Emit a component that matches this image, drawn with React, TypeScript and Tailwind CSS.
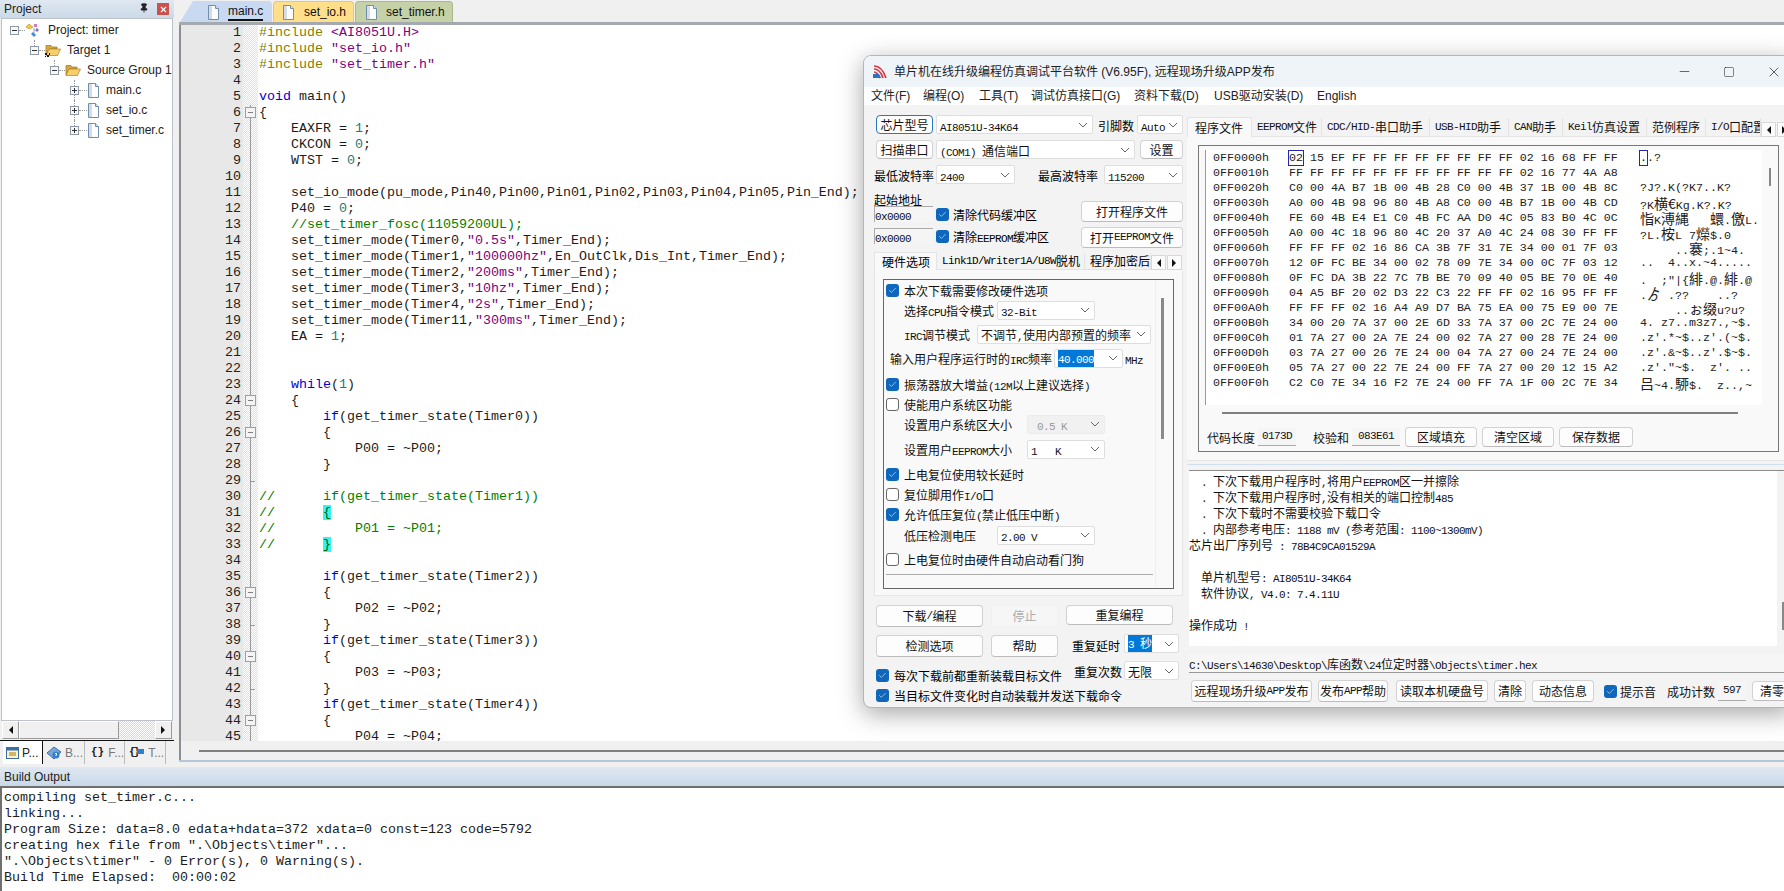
import React from 'react';
import { Minus, Square, X, Pin, Check } from 'lucide-react';

const codeLines = [
  '#include <AI8051U.H>',
  '#include "set_io.h"',
  '#include "set_timer.h"',
  '',
  'void main()',
  '{',
  '    EAXFR = 1;',
  '    CKCON = 0;',
  '    WTST = 0;',
  '',
  '    set_io_mode(pu_mode,Pin40,Pin00,Pin01,Pin02,Pin03,Pin04,Pin05,Pin_End);',
  '    P40 = 0;',
  '    //set_timer_fosc(11059200UL);',
  '    set_timer_mode(Timer0,"0.5s",Timer_End);',
  '    set_timer_mode(Timer1,"100000hz",En_OutClk,Dis_Int,Timer_End);',
  '    set_timer_mode(Timer2,"200ms",Timer_End);',
  '    set_timer_mode(Timer3,"10hz",Timer_End);',
  '    set_timer_mode(Timer4,"2s",Timer_End);',
  '    set_timer_mode(Timer11,"300ms",Timer_End);',
  '    EA = 1;',
  '',
  '',
  '    while(1)',
  '    {',
  '        if(get_timer_state(Timer0))',
  '        {',
  '            P00 = ~P00;',
  '        }',
  '',
  '//      if(get_timer_state(Timer1))',
  '//      {',
  '//          P01 = ~P01;',
  '//      }',
  '',
  '        if(get_timer_state(Timer2))',
  '        {',
  '            P02 = ~P02;',
  '        }',
  '        if(get_timer_state(Timer3))',
  '        {',
  '            P03 = ~P03;',
  '        }',
  '        if(get_timer_state(Timer4))',
  '        {',
  '            P04 = ~P04;',
];

const foldBoxes = [6, 24, 26, 36, 40, 44];
const foldTicks = [29, 38, 42];

const hexRows = [
  ['0FF0000h', '02 15 EF FF FF FF FF FF FF FF FF 02 16 68 FF FF', '..?'],
  ['0FF0010h', 'FF FF FF FF FF FF FF FF FF FF FF 02 16 77 4A A8', ''],
  ['0FF0020h', 'C0 00 4A B7 1B 00 4B 28 C0 00 4B 37 1B 00 4B 8C', '?J?.K(?K7..K?'],
  ['0FF0030h', 'A0 00 4B 98 96 80 4B A8 C0 00 4B B7 1B 00 4B CD', '?K横€Kg.K?.K?'],
  ['0FF0040h', 'FE 60 4B E4 E1 C0 4B FC AA D0 4C 05 83 B0 4C 0C', '恉K溥縄   蠉.儌L.'],
  ['0FF0050h', 'A0 00 4C 18 96 80 4C 20 37 A0 4C 24 08 30 FF FF', '?L.桉L 7爃$.0'],
  ['0FF0060h', 'FF FF FF 02 16 86 CA 3B 7F 31 7E 34 00 01 7F 03', '     ..褰;.1~4.'],
  ['0FF0070h', '12 0F FC BE 34 00 02 78 09 7E 34 00 0C 7F 03 12', '..  4..x.~4.....'],
  ['0FF0080h', '0F FC DA 3B 22 7C 7B BE 70 09 40 05 BE 70 0E 40', '.  ;"|{緋.@.緋.@'],
  ['0FF0090h', '04 A5 BF 20 02 D3 22 C3 22 FF FF 02 16 95 FF FF', '.ゟ .??    ..?'],
  ['0FF00A0h', 'FF FF FF 02 16 A4 A9 D7 BA 75 EA 00 75 E9 00 7E', '     ..ぉ缀u?u?'],
  ['0FF00B0h', '34 00 20 7A 37 00 2E 6D 33 7A 37 00 2C 7E 24 00', '4. z7..m3z7.,~$.'],
  ['0FF00C0h', '01 7A 27 00 2A 7E 24 00 02 7A 27 00 28 7E 24 00', ".z'.*~$..z'.(~$."],
  ['0FF00D0h', '03 7A 27 00 26 7E 24 00 04 7A 27 00 24 7E 24 00', ".z'.&~$..z'.$~$."],
  ['0FF00E0h', '05 7A 27 00 22 7E 24 00 FF 7A 27 00 20 12 15 A2', ".z'.\"~$.  z'. .."],
  ['0FF00F0h', 'C2 C0 7E 34 16 F2 7E 24 00 FF 7A 1F 00 2C 7E 34', '吕~4.駵$.  z..,~'],
];

const logLines = [
  '  . 下次下载用户程序时,将用户EEPROM区一并擦除',
  '  . 下次下载用户程序时,没有相关的端口控制485',
  '  . 下次下载时不需要校验下载口令',
  '  . 内部参考电压: 1188 mV (参考范围: 1100~1300mV)',
  '芯片出厂序列号 : 78B4C9CA01529A',
  '',
  '  单片机型号: AI8051U-34K64',
  '  软件协议, V4.0: 7.4.11U',
  '',
  '操作成功 !',
];

const buildLines = [
  'compiling set_timer.c...',
  'linking...',
  'Program Size: data=8.0 edata+hdata=372 xdata=0 const=123 code=5792',
  'creating hex file from ".\\Objects\\timer"...',
  '".\\Objects\\timer" - 0 Error(s), 0 Warning(s).',
  'Build Time Elapsed:  00:00:02',
];

const cjkSplit = /([\u2E80-\u9FFF\uFF00-\uFFEF\u3000-\u303F€]+)/;

// SimSun-like text: CJK at 12px, latin squeezed to half width
const T: React.FC<{ text: string }> = ({ text }) => (
  <>
    {text.split(cjkSplit).map((part, i) =>
      i % 2 === 1 ? (
        <span key={i} className="font-['Noto_Sans_CJK_SC',sans-serif] text-[12px]">{part}</span>
      ) : (
        <span key={i} className="font-['Liberation_Mono',monospace] text-[11px] tracking-[-0.6px]">{part}</span>
      )
    )}
  </>
);

const AsciiText: React.FC<{ text: string }> = ({ text }) => (
  <>
    {text.split(cjkSplit).map((part, i) =>
      i % 2 === 1 ? (
        <span key={i} className="font-['Noto_Sans_CJK_SC',sans-serif] text-[14px]">{part}</span>
      ) : (
        <span key={i}>{part}</span>
      )
    )}
  </>
);

const tokenRe = /("[^"]*"|<AI8051U\.H>|#include|\/\/.*$|\b(?:void|while|if)\b|\b\d+\b)/;

const CodeText: React.FC<{ line: string }> = ({ line }) => {
  if (line.startsWith('//')) {
    const m = line.match(/^(.*?)([{}])$/);
    if (m && m[1].trim() === '//') {
      return (
        <span className="text-[#008000]">
          {m[1]}
          <span className="bg-[#33f4f4] text-[#006000]">{m[2]}</span>
        </span>
      );
    }
    return <span className="text-[#008000]">{line}</span>;
  }
  return (
    <>
      {line.split(tokenRe).map((part, i) => {
        if (i % 2 === 0) return <span key={i}>{part}</span>;
        if (part === '#include') return <span key={i} className="text-[#808000]">{part}</span>;
        if (part.startsWith('"') || part.startsWith('<')) return <span key={i} className="text-[#800080]">{part}</span>;
        if (part.startsWith('//')) return <span key={i} className="text-[#008000]">{part}</span>;
        if (/^\d/.test(part)) return <span key={i} className="text-[#108080]">{part}</span>;
        return <span key={i} className="text-[#0000d0]">{part}</span>;
      })}
    </>
  );
};

const FileIcon = () => (
  <svg width="13" height="15" viewBox="0 0 13 15" className="shrink-0">
    <path d="M1.5 .5h7l3 3v11h-10z" fill="#fff" stroke="#6f8fb0" />
    <path d="M2 1h3v13H2z" fill="#d5dce6" />
    <path d="M8.5 .5v3h3" fill="#dfe8f2" stroke="#6f8fb0" />
  </svg>
);

const FolderIcon: React.FC<{ target?: boolean }> = ({ target }) => (
  <svg width="16" height="14" viewBox="0 0 16 14" className="shrink-0">
    <path d="M1 2.500h5l1 1.500h5v2H4L1 12z" fill="#d9a93a" stroke="#9a7420" strokeWidth=".7" />
    <path d="M4 6h11.500L12.500 12.500H1z" fill="#f6cf6b" stroke="#a98228" strokeWidth=".7" />
    {target && <path d="M0 10h2v2H0zM2 12h2v2H2zM4 10h1v2H4zM0 13h1v1H0z" fill="#111" />}
  </svg>
);

const ProjectIcon = () => (
  <svg width="16" height="15" viewBox="0 0 16 15" className="shrink-0">
    <path d="M1 4l3-3 4 3-3 2z" fill="#f3c84a" stroke="#b38a1c" strokeWidth=".6" />
    <path d="M9 1h3v3H9z" fill="#d07bc0" />
    <path d="M12 5l2 2-2 2-2-2z" fill="#7c6fd0" />
    <path d="M8 9l3 3-2 2-3-3z" fill="#3a8edb" />
    <path d="M9 5v5" stroke="#888" strokeWidth=".8" />
  </svg>
);

const TreeBox: React.FC<{ open?: boolean }> = ({ open }) => (
  <div className="relative w-[9px] h-[9px] border border-[#8f9aa6] bg-[#f5f7fa] shrink-0 flex items-center justify-center">
    <div className="w-[5px] h-px bg-[#333]" />
    {!open && <div className="absolute w-px h-[5px] bg-[#333]" />}
  </div>
);

const TreeRow: React.FC<{ box: string; open?: boolean; icon: React.ReactNode; label: string; link: string; tail: string; vline?: string }> = ({ box, open, icon, label, link, tail, vline }) => (
  <div className={`relative flex items-center h-[20px] ${box}`}>
    {vline && <div className={`absolute border-l border-dotted border-[#999] ${vline}`} />}
    <TreeBox open={open} />
    <div className={`h-0 border-t border-dotted border-[#999] shrink-0 ${link}`} />
    <div className={`flex items-center shrink-0 ${tail}`}>{icon}</div>
    <span className="text-[12px] text-[#222] whitespace-nowrap font-['Liberation_Sans',sans-serif]">{label}</span>
  </div>
);

const Arrow: React.FC<{ dir: 'left' | 'right' }> = ({ dir }) => (
  <svg width="5" height="8" viewBox="0 0 5 8">
    <path d={dir === 'left' ? 'M5 0v8L1 4z' : 'M0 0v8l4-4z'} fill="#111" />
  </svg>
);

const ProjectPane = () => (
  <div className="w-[174px] h-full flex flex-col shrink-0">
    <div className="h-[18px] bg-gradient-to-b from-[#dfe8f2] to-[#ccd9e7] flex items-center pl-[4px] font-['Liberation_Sans',sans-serif] text-[12px] text-[#222] relative">
      Project
      <Pin size={10} className="absolute left-[139px] top-[3px] text-[#222] fill-[#222]" />
      <div className="absolute left-[157px] top-[3px] w-[12px] h-[12px] bg-[#c9524e] flex items-center justify-center">
        <X size={9} strokeWidth={3} className="text-white" />
      </div>
    </div>
    <div className="flex-1 mx-px border border-[#bcc3cb] bg-white pt-[1px] mr-[1px]">
      <TreeRow box="pl-[8px]" open link="w-[6px]" tail="pr-[7px]" icon={<ProjectIcon />} label="Project: timer" />
      <TreeRow box="pl-[28px]" open link="w-[6px]" tail="pr-[6px]" vline="left-[32px] top-0 h-[6px]" icon={<FolderIcon target />} label="Target 1" />
      <TreeRow box="pl-[48px]" open link="w-[6px]" tail="pr-[6px]" vline="left-[52px] top-0 h-[6px]" icon={<FolderIcon />} label="Source Group 1" />
      <TreeRow box="pl-[68px]" link="w-[8px]" tail="pr-[6px]" vline="left-[72px] inset-y-0" icon={<FileIcon />} label="main.c" />
      <TreeRow box="pl-[68px]" link="w-[8px]" tail="pr-[6px]" vline="left-[72px] inset-y-0" icon={<FileIcon />} label="set_io.c" />
      <TreeRow box="pl-[68px]" link="w-[8px]" tail="pr-[6px]" vline="left-[72px] top-0 h-[6px]" icon={<FileIcon />} label="set_timer.c" />
    </div>
    <div className="h-[18px] mx-[2px] flex bg-[#ececec]">
      <div className="w-[17px] h-full bg-[#f0f0f0] border border-[#9a9a9a] border-t-white border-l-white flex items-center justify-center"><Arrow dir="left" /></div>
      <div className="w-[100px] h-full bg-[#f0f0f0] border border-[#9a9a9a] border-t-white border-l-white" />
      <div className="flex-1 h-full bg-[repeating-conic-gradient(#d8d8d8_0_25%,#ffffff_0_50%)] bg-[length:2px_2px]" />
      <div className="w-[17px] h-full bg-[#f0f0f0] border border-[#9a9a9a] border-t-white border-l-white flex items-center justify-center"><Arrow dir="right" /></div>
    </div>
    <div className="h-[27px] mt-[1px] border-t border-[#111] flex text-[12px] font-['Liberation_Sans',sans-serif] text-[#777] pl-[3px]">
      <div className="w-[40px] h-[23px] bg-white flex items-center pl-[3px] gap-[3px] text-[#222] border-r border-[#111]">
        <svg width="13" height="12" viewBox="0 0 13 12"><rect x=".5" y=".5" width="12" height="11" fill="#fff3c0" stroke="#3a6ea5" /><rect x=".5" y=".5" width="12" height="3" fill="#3a6ea5" /><path d="M3 6h7M3 8h7" stroke="#a07820" /></svg>
        P...
      </div>
      <div className="w-[42px] h-[23px] flex items-center pl-[3px] gap-[3px] border-r border-[#bbb]">
        <svg width="16" height="14" viewBox="0 0 16 14"><path d="M1 7l7-6 7 5-7 7z" fill="#7aa5d8" stroke="#3f6ea8" /><circle cx="10" cy="9" r="3.500" fill="#2f7fd0" /><path d="M9 8q1-1.500 2 0l-1 1v1" stroke="#fff" fill="none" /></svg>
        B...
      </div>
      <div className="w-[40px] h-[23px] flex items-center pl-[6px] gap-[4px] border-r border-[#bbb]">
        <span className="text-[#222] font-bold font-['Liberation_Mono',monospace] text-[11px]">{'{}'}</span>
        F...
      </div>
      <div className="w-[41px] h-[23px] flex items-center pl-[4px] gap-[4px] border-r border-[#bbb]">
        <span className="relative text-[#222] font-bold font-['Liberation_Mono',monospace] text-[11px] tracking-[-2px] pr-[6px]">{'{}'}
          <span className="absolute right-0 top-[5px] w-[7px] h-[5px] bg-[#2f7fd0]" />
        </span>
        T...
      </div>
    </div>
  </div>
);

const EditorTab: React.FC<{ label: string; className: string; active?: boolean }> = ({ label, className, active }) => (
  <div className={`h-[21px] flex items-center rounded-t-[4px] border border-b-0 ${className}`}>
    <FileIcon />
    <span className={`text-[12px] text-[#111] font-['Liberation_Sans',sans-serif] ${active ? 'border-b-2 border-[#111] leading-[15px] font-medium' : ''}`}>{label}</span>
  </div>
);

const CodeRow: React.FC<{ n: number; line: string }> = ({ n, line }) => {
  const boxed = foldBoxes.includes(n);
  const tick = foldTicks.includes(n);
  return (
    <div className="h-[16px] flex leading-[16px]">
      <div className="w-[62px] bg-[#e8e8e8] text-right pr-[2px] shrink-0 text-[#222]">{n}</div>
      <div className="relative w-[15px] shrink-0 bg-[repeating-conic-gradient(#e0e0e0_0_25%,#ffffff_0_50%)] bg-[length:2px_2px]">
        {n >= 6 && <div className="absolute left-[7px] top-0 bottom-0 w-px bg-[#9a9a9a]" />}
        {boxed && (
          <div className="absolute left-[2px] top-[2px] w-[11px] h-[11px] border border-[#a0a0a0] bg-[#f4f4f4] flex items-center justify-center">
            <div className="w-[5px] h-px bg-[#808080]" />
          </div>
        )}
        {tick && <div className="absolute left-[7px] top-[8px] w-[5px] h-px bg-[#9a9a9a]" />}
      </div>
      <div className="pl-px whitespace-pre text-[#1c1c1c]"><CodeText line={line} /></div>
    </div>
  );
};

const Editor = () => (
  <div className="flex-1 min-w-0 h-full flex flex-col ml-[4px]">
    <div className="h-[22px] flex items-end relative pl-[2px]">
      <div className="w-0 h-0 border-l-[13px] border-l-transparent border-b-[21px] border-b-[#c9d9f1]" />
      <EditorTab label="main.c" active className="w-[79px] pl-[14px] gap-[8px] border-[#c9d9f1] bg-[#c9d9f1] border-l-0 rounded-tl-none" />
      <EditorTab label="set_io.h" className="ml-px w-[81px] pl-[8px] gap-[9px] border-[#e6c779] bg-[#ffdf8a]" />
      <EditorTab label="set_timer.h" className="ml-px w-[98px] pl-[9px] gap-[8px] border-[#aab88c] bg-[#c5d1a6]" />
    </div>
    <div className="h-[3px] bg-[#a5aab0] ml-[1px]" />
    <div className="h-[716px] overflow-hidden bg-white border-l-2 border-[#8a8f96] ml-[1px] font-['Liberation_Mono',monospace] text-[13.33px]">
      {codeLines.map((line, i) => (
        <CodeRow key={i} n={i + 1} line={line} />
      ))}
    </div>
    <div className="h-[19px] bg-[#f0f0f0] border-l-2 border-[#8a8f96] ml-[1px] flex items-center pl-[18px]">
      <div className="h-[2px] w-full bg-[#808080]" />
    </div>
    <div className="h-[2px] bg-[#b7c6d6] ml-[1px]" />
    <div className="h-[5px]" />
  </div>
);

const BuildOutput = () => (
  <div className="flex-1 flex flex-col min-h-0">
    <div className="h-[19px] bg-gradient-to-b from-[#dfe8f2] to-[#c9d8e8] flex items-center pl-[4px] text-[12px] text-[#222] font-['Liberation_Sans',sans-serif]">
      Build Output
    </div>
    <div className="flex-1 bg-white border-t-2 border-l-2 border-[#6f6f6f] pt-[2px] pl-[2px] font-['Liberation_Mono',monospace] text-[13.33px] leading-[16px] text-[#1c1c1c] whitespace-pre">
      {buildLines.map((line, i) => (
        <div key={i}>{line}</div>
      ))}
    </div>
  </div>
);

const Chevron = () => (
  <svg width="10" height="6" viewBox="0 0 10 6" className="shrink-0">
    <path d="M1 1l4 4 4-4" fill="none" stroke="#666" strokeWidth="1" />
  </svg>
);

const Sel: React.FC<{ text: string; className: string; selected?: boolean; disabled?: boolean }> = ({ text, className, selected, disabled }) => (
  <div className={`flex items-center justify-between shrink-0 rounded-[2px] border pl-[3px] pr-[4px] whitespace-pre ${disabled ? 'bg-[#f1f1f1] border-[#ececec] text-[#999]' : 'bg-white border-[#dedede] text-[#111]'} ${className}`}>
    {selected ? (
      <span className="bg-[#0078d7] text-white leading-[14px]"><T text={text} /></span>
    ) : (
      <span><T text={text} /></span>
    )}
    <Chevron />
  </div>
);

const Btn: React.FC<{ text: string; className: string; primary?: boolean; disabled?: boolean }> = ({ text, className, primary, disabled }) => (
  <div className={`flex items-center justify-center shrink-0 rounded-[4px] border whitespace-nowrap ${primary ? 'border-[#2878c0] bg-[#fdfdfd] text-[#111]' : disabled ? 'border-[#f0f0f0] bg-[#f6f6f6] text-[#aaa]' : 'border-[#d2d2d2] border-b-[#bcbcbc] bg-[#fdfdfd] text-[#111]'} ${className}`}>
    <T text={text} />
  </div>
);

const Chk: React.FC<{ on?: boolean }> = ({ on }) =>
  on ? (
    <div className="w-[13px] h-[13px] shrink-0 rounded-[3px] bg-[#0f66bd] flex items-center justify-center">
      <Check size={9} strokeWidth={1.5} className="text-white" />
    </div>
  ) : (
    <div className="w-[13px] h-[13px] shrink-0 rounded-[3px] border border-[#666] bg-white" />
  );

const ChkRow: React.FC<{ on?: boolean; text: string; className: string }> = ({ on, text, className }) => (
  <div className={`flex items-center h-[20px] pl-[2px] gap-[5px] whitespace-nowrap ${className}`}>
    <Chk on={on} />
    <span><T text={text} /></span>
  </div>
);

const Label: React.FC<{ text: string; className: string }> = ({ text, className }) => (
  <div className={`shrink-0 whitespace-nowrap ${className}`}><T text={text} /></div>
);

const MiniTab: React.FC<{ text: string; className: string; active?: boolean }> = ({ text, className, active }) => (
  <div className={`shrink-0 overflow-hidden whitespace-nowrap flex items-center pl-[5px] ${active ? 'bg-[#f9f9f9] border-t border-l border-r border-[#e4e4e4]' : 'border-r border-b border-[#e4e4e4] bg-[#f3f3f3]'} ${className}`}>
    <T text={text} />
  </div>
);

const TabScroller = () => (
  <div className="shrink-0 flex gap-px w-[32px]">
    <div className="w-[15px] h-[15px] bg-[#fbfbfb] border border-[#d8d8d8] flex items-center justify-center"><Arrow dir="left" /></div>
    <div className="w-[15px] h-[15px] bg-[#fbfbfb] border border-[#d8d8d8] flex items-center justify-center"><Arrow dir="right" /></div>
  </div>
);

const HardwarePanel = () => (
  <div className="relative mx-[8px] h-[310px] border border-[#666] text-[#111]">
    <ChkRow on text="本次下载需要修改硬件选项" className="" />
    <div className="flex items-center h-[20px] pl-[20px]">
      <Label text="选择CPU指令模式" className="w-[93px]" />
      <Sel text="32-Bit" className="w-[98px] h-[19px]" />
    </div>
    <div className="flex items-center h-[20px] mt-[4px] pl-[20px]">
      <Label text="IRC调节模式" className="w-[73px]" />
      <Sel text="不调节,使用内部预置的频率" className="w-[174px] h-[19px]" />
    </div>
    <div className="flex items-center h-[20px] mt-[4px] pl-[6px]">
      <Label text="输入用户程序运行时的IRC频率" className="w-[164px]" />
      <Sel selected text="40.000" className="w-[69px] h-[19px] border-[#777]" />
      <Label text="MHz" className="ml-[2px]" />
    </div>
    <ChkRow on text="振荡器放大增益(12M以上建议选择)" className="mt-[6px]" />
    <ChkRow text="使能用户系统区功能" className="" />
    <div className="flex items-center h-[20px] pl-[20px]">
      <Label text="设置用户系统区大小" className="w-[123px]" />
      <Sel disabled text=" 0.5 K" className="w-[78px] h-[19px]" />
    </div>
    <div className="flex items-center h-[20px] mt-[5px] pl-[20px]">
      <Label text="设置用户EEPROM大小" className="w-[123px]" />
      <Sel text="1   K" className="w-[78px] h-[19px]" />
    </div>
    <ChkRow on text="上电复位使用较长延时" className="mt-[5px]" />
    <ChkRow text="复位脚用作I/O口" className="" />
    <ChkRow on text="允许低压复位(禁止低压中断)" className="" />
    <div className="flex items-center h-[20px] mt-px pl-[20px]">
      <Label text="低压检测电压" className="w-[93px]" />
      <Sel text="2.00 V" className="w-[98px] h-[19px]" />
    </div>
    <ChkRow text="上电复位时由硬件自动启动看门狗" className="mt-[4px]" />
    <div className="mt-[5px] ml-[2px] w-[267px] h-px bg-[#aaa]" />
    <div className="absolute left-[277px] top-[18px] w-[3px] h-[141px] bg-[#8a8a8a]" />
    <div className="absolute left-[271px] top-0 bottom-0 w-px bg-[#efefef]" />
  </div>
);

const LeftColumn = () => (
  <div className="w-[323px] shrink-0 pl-[10px] pr-[4px] pt-[10px]">
    <div className="flex items-center h-[19px] pl-[2px]">
      <Btn primary text="芯片型号" className="w-[57px] h-[19px]" />
      <Sel text="AI8051U-34K64" className="ml-[3px] w-[157px] h-[19px]" />
      <Label text="引脚数" className="ml-[5px] w-[36px]" />
      <Sel text="Auto" className="ml-[3px] w-[46px] h-[19px]" />
    </div>
    <div className="flex items-center h-[19px] mt-[6px] pl-[2px]">
      <Btn text="扫描串口" className="w-[57px] h-[19px]" />
      <Sel text="(COM1) 通信端口" className="ml-[3px] w-[199px] h-[19px]" />
      <Btn text="设置" className="ml-[5px] w-[43px] h-[19px]" />
    </div>
    <div className="flex items-center h-[19px] mt-[6px]">
      <Label text="最低波特率" className="w-[62px]" />
      <Sel text="2400" className="w-[79px] h-[19px]" />
      <Label text="最高波特率" className="ml-[23px] w-[66px]" />
      <Sel text="115200" className="w-[79px] h-[19px]" />
    </div>
    <div className="flex justify-between mt-[8px] w-[309px]">
      <div>
        <div className="h-[14px] leading-[14px]"><T text="起始地址" /></div>
        <div className="flex items-center h-[16px]">
          <div className="w-[59px] h-[16px] border-t border-l border-[#aaa] border-b-[#ccc] bg-[#f5f5f5] leading-[15px] text-[#111]"><T text="0x0000" /></div>
          <div className="ml-[3px]"><Chk on /></div>
          <span className="ml-[4px]"><T text="清除代码缓冲区" /></span>
        </div>
        <div className="flex items-center h-[16px] mt-[6px]">
          <div className="w-[59px] h-[16px] border-t border-l border-[#aaa] bg-[#f5f5f5] leading-[15px] text-[#111]"><T text="0x0000" /></div>
          <div className="ml-[3px]"><Chk on /></div>
          <span className="ml-[4px]"><T text="清除EEPROM缓冲区" /></span>
        </div>
      </div>
      <div className="pt-[9px]">
        <Btn text="打开程序文件" className="w-[102px] h-[21px]" />
        <Btn text="打开EEPROM文件" className="w-[102px] h-[21px] mt-[5px]" />
      </div>
    </div>
    <div className="flex items-end h-[18px] mt-[4px] w-[309px]">
      <MiniTab active text="硬件选项" className="w-[63px] h-[18px] pl-[7px]" />
      <MiniTab text="Link1D/Writer1A/U8W脱机" className="w-[148px] h-[17px]" />
      <MiniTab text="程序加密后传输" className="w-[66px] h-[17px]" />
      <TabScroller />
    </div>
    <div className="w-[309px] h-[326px] pt-[9px] bg-[#f9f9f9] border border-t-0 border-[#e6e6e6]">
      <HardwarePanel />
    </div>
    <div className="flex mt-[9px] pl-[2px] items-start">
      <Btn text="下载/编程" className="w-[107px] h-[22px]" />
      <Btn disabled text="停止" className="ml-[8px] w-[67px] h-[22px]" />
      <Btn text="重复编程" className="ml-[8px] w-[107px] h-[20px]" />
    </div>
    <div className="flex mt-[8px] pl-[2px] items-start">
      <Btn text="检测选项" className="w-[107px] h-[22px]" />
      <Btn text="帮助" className="ml-[8px] w-[67px] h-[22px]" />
      <Label text="重复延时" className="ml-[14px] w-[52px] leading-[20px]" />
      <Sel selected text="3 秒" className="w-[55px] h-[19px] border-[#888] -mt-px" />
    </div>
    <div className="relative h-[46px] mt-[1px] pt-[6px]">
      <ChkRow on text="每次下载前都重新装载目标文件" className="pl-0 gap-[3px]" />
      <ChkRow on text="当目标文件变化时自动装载并发送下载命令" className="pl-0 gap-[3px]" />
      <div className="absolute left-[200px] top-[2px] flex items-center h-[19px]">
        <Label text="重复次数" className="w-[50px]" />
        <Sel text="无限" className="w-[55px] h-[19px]" />
      </div>
    </div>
  </div>
);

const tabsRight: [string, string][] = [
  ['EEPROM文件', 'w-[70px] h-[19px]'],
  ['CDC/HID-串口助手', 'w-[108px] h-[19px]'],
  ['USB-HID助手', 'w-[79px] h-[19px]'],
  ['CAN助手', 'w-[54px] h-[19px]'],
  ['Keil仿真设置', 'w-[84px] h-[19px]'],
  ['范例程序', 'w-[59px] h-[19px]'],
  ['I/O口配置', 'w-[55px] h-[19px]'],
];

const HexView = () => (
  <div className="ml-[11px] w-[581px] h-[307px] border border-[#777] relative">
    <div className="ml-[6px] mt-[4px] w-[557px] h-[255px] bg-white border-l border-[#999] pt-[1px] font-['Liberation_Mono',monospace] text-[11.67px] leading-[15px] text-[#222] whitespace-pre">
      {hexRows.map(([addr, bytes, ascii], i) => (
        <div key={addr} className="h-[15px] flex">
          <div className="w-[83px] pl-[7px]">{addr}</div>
          <div className="w-[351px]">
            {i === 0 ? (
              <>
                <span className="outline-1 outline-[#2525b0]">{bytes.slice(0, 2)}</span>
                {bytes.slice(2)}
              </>
            ) : (
              bytes
            )}
          </div>
          <div>
            {i === 0 ? (
              <>
                <span className="outline-1 outline-[#2525b0]">.</span>
                {ascii.slice(1)}
              </>
            ) : (
              <AsciiText text={ascii} />
            )}
          </div>
        </div>
      ))}
    </div>
    <div className="absolute left-[570px] top-[22px] w-[2px] h-[18px] bg-[#888]" />
    <div className="mt-[7px] ml-[23px] w-[516px] h-[2px] bg-[#808080]" />
    <div className="flex items-center h-[18px] mt-[14px] ml-[8px] text-[#111]">
      <Label text="代码长度" className="w-[51px]" />
      <div className="w-[38px] h-[18px] border-b border-[#aaa] bg-[#f5f5f5] flex items-center justify-center"><T text="0173D" /></div>
      <Label text="校验和" className="ml-[17px] w-[39px]" />
      <div className="w-[48px] h-[18px] border-b border-[#aaa] bg-[#f5f5f5] flex items-center justify-center"><T text="083E61" /></div>
      <Btn text="区域填充" className="ml-[5px] w-[72px] h-[20px]" />
      <Btn text="清空区域" className="ml-[5px] w-[72px] h-[20px]" />
      <Btn text="保存数据" className="ml-[5px] w-[74px] h-[20px]" />
    </div>
  </div>
);

const RightColumn = () => (
  <div className="flex-1 min-w-0 pt-[12px] text-[#111]">
    <div className="flex h-[20px] items-end">
      <MiniTab active text="程序文件" className="w-[65px] h-[20px] pl-[7px]" />
      {tabsRight.map(([label, cls]) => (
        <MiniTab key={label} text={label} className={cls} />
      ))}
      <TabScroller />
    </div>
    <div className="h-[324px] pt-[8px] bg-[#f9f9f9] border-b border-[#e4e4e4]">
      <HexView />
    </div>
    <div className="h-px mt-[3px] bg-[#cfe0f0]" />
    <div className="mt-[5px] h-[176px] mx-[2px] bg-white border-t border-[#8c8c8c] pt-[1px] leading-[16px] whitespace-pre relative">
      {logLines.map((line, i) => (
        <div key={i} className="h-[16px]"><T text={line} /></div>
      ))}
      <div className="absolute left-[588px] top-0 bottom-0 w-[12px] bg-[#f3f3f3]" />
      <div className="absolute left-[593px] top-[131px] w-[2px] h-[28px] bg-[#888]" />
    </div>
    <div className="h-[19px] mt-[8px] ml-[2px] border-b border-[#999] bg-[#f6f6f6] leading-[18px] whitespace-pre">
      <T text="C:\Users\14630\Desktop\库函数\24位定时器\Objects\timer.hex" />
    </div>
    <div className="flex items-center h-[22px] mt-[7px] ml-[4px]">
      <Btn text="远程现场升级APP发布" className="w-[121px] h-[22px]" />
      <Btn text="发布APP帮助" className="ml-[6px] w-[70px] h-[22px]" />
      <Btn text="读取本机硬盘号" className="ml-[8px] w-[92px] h-[22px]" />
      <Btn text="清除" className="ml-[6px] w-[32px] h-[22px]" />
      <Btn text="动态信息" className="ml-[6px] w-[62px] h-[22px]" />
      <div className="ml-[10px]"><Chk on /></div>
      <Label text="提示音" className="ml-[3px] w-[36px]" />
      <Label text="成功计数" className="ml-[11px] w-[49px]" />
      <div className="ml-[2px] w-[38px] h-[20px] border-b border-[#aaa] bg-[#f5f5f5] flex items-center justify-center"><T text="597" /></div>
      <Btn text="清零" className="ml-[6px] w-[40px] h-[20px]" />
    </div>
  </div>
);

const DownloadWindow = () => (
  <div className="absolute left-[863px] top-[55px] w-[930px] h-[653px] rounded-[8px] border border-[#b5b5b5] bg-[#f3f3f3] shadow-[0_6px_24px_rgba(0,0,0,0.35)] overflow-hidden flex flex-col">
    <div className="h-[31px] shrink-0 bg-[#eff4f9] flex items-center pl-[9px] text-[12px] text-[#222] font-['Liberation_Sans','Noto_Sans_CJK_SC',sans-serif]">
      <svg width="15" height="14" viewBox="0 0 15 14" className="shrink-0">
        <path d="M1 1q8 0 12 12M1 4q6 0 9 9M1 7q3 0 6 6" fill="none" stroke="#d9363e" strokeWidth="1.700" />
        <path d="M0 9h6l2 4H0z" fill="#2f6fc0" />
      </svg>
      <span className="ml-[6px] whitespace-nowrap">单片机在线升级编程仿真调试平台软件 (V6.95F), 远程现场升级APP发布</span>
      <div className="ml-auto flex items-center gap-[31px] pr-[10px] text-[#111]">
        <Minus size={15} strokeWidth={1} />
        <Square size={12} strokeWidth={1} />
        <X size={16} strokeWidth={1} />
      </div>
    </div>
    <div className="h-[18px] shrink-0 bg-white flex items-center pl-[7px] text-[12px] text-[#222] font-['Liberation_Sans','Noto_Sans_CJK_SC',sans-serif]">
      <span className="w-[52px]">文件(F)</span>
      <span className="w-[56px]">编程(O)</span>
      <span className="w-[52px]">工具(T)</span>
      <span className="w-[103px]">调试仿真接口(G)</span>
      <span className="w-[80px]">资料下载(D)</span>
      <span className="w-[103px]">USB驱动安装(D)</span>
      <span>English</span>
    </div>
    <div className="flex-1 min-h-0 flex">
      <LeftColumn />
      <RightColumn />
    </div>
  </div>
);

export default function App() {
  return (
    <div className="relative w-[1784px] h-[891px] overflow-hidden bg-[#f0f0f0] flex flex-col">
      <div className="h-[767px] shrink-0 flex">
        <ProjectPane />
        <Editor />
      </div>
      <BuildOutput />
      <DownloadWindow />
    </div>
  );
}
